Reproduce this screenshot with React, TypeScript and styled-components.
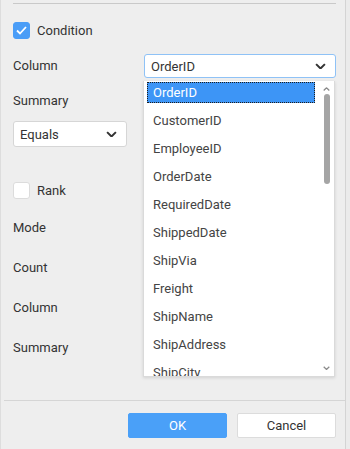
import styled, { createGlobalStyle } from 'styled-components';

const Global = createGlobalStyle`
  html, body {
    margin: 0;
    padding: 0;
    background: #eeeeee;
  }
  body {
    font-family: Roboto, "Liberation Sans", sans-serif;
    font-size: 13px;
    color: #333333;
  }
`;

const Frame = styled.div`
  display: flex;
  width: 350px;
  height: 449px;
  overflow: hidden;
`;

const Panel = styled.div`
  position: relative;
  flex: 1;
  display: flex;
  flex-direction: column;
  border-left: 1px solid #dddddd;
`;

const Edge = styled.div`
  width: 4px;
  border-left: 1px solid #d4d4d4;
  background: #ebebeb;
`;

const TopRule = styled.div`
  height: 1px;
  margin: 3px 9px 0 12px;
  background: #c9c9c9;
`;

const Form = styled.div`
  display: flex;
  flex-direction: column;
  padding: 0 9px 0 12px;
`;

const Row = styled.div<{ $top: number; $h: number }>`
  display: flex;
  align-items: center;
  height: ${(p) => p.$h}px;
  margin-top: ${(p) => p.$top}px;
`;

const Label = styled.span`
  flex: 1;
  line-height: 16px;
`;

const Check = styled.span<{ $on?: boolean }>`
  display: inline-flex;
  align-items: center;
  justify-content: center;
  box-sizing: border-box;
  width: 17px;
  height: 17px;
  margin-right: 7px;
  border-radius: 3px;
  background: ${(p) => (p.$on ? '#4a9df7' : '#ffffff')};
  border: 1px solid ${(p) => (p.$on ? '#4a9df7' : '#dcdcdc')};
`;

const CheckText = styled.span`
  line-height: 16px;
`;

const Select = styled.div<{ $w: number; $focus?: boolean }>`
  display: flex;
  align-items: center;
  justify-content: space-between;
  box-sizing: border-box;
  width: ${(p) => p.$w}px;
  height: 100%;
  padding: 0 9px 0 6px;
  background: #ffffff;
  border: 1px solid ${(p) => (p.$focus ? '#8fc2f6' : '#d6d6d6')};
  border-radius: 3px;
  color: #333333;
`;

const Popup = styled.div`
  position: absolute;
  left: 142px;
  top: 81px;
  box-sizing: border-box;
  width: 192px;
  height: 296px;
  padding: 1px 0 0 3px;
  background: #ffffff;
  border: 1px solid #dadada;
  border-top: none;
  box-shadow: 0 1px 3px rgba(0, 0, 0, 0.12);
  overflow: hidden;
`;

const Item = styled.div<{ $sel?: boolean }>`
  box-sizing: border-box;
  width: 168px;
  height: 21px;
  margin-bottom: 7px;
  padding-left: 5px;
  display: flex;
  align-items: center;
  color: ${(p) => (p.$sel ? '#ffffff' : '#444444')};
  background: ${(p) => (p.$sel ? '#3d95f6' : 'transparent')};
  border: 1px dotted ${(p) => (p.$sel ? '#1d1d1d' : 'transparent')};
`;

const Track = styled.div`
  position: absolute;
  top: 0;
  right: 0;
  width: 15px;
  height: 100%;
  display: flex;
  flex-direction: column;
  align-items: center;
`;

const Arrow = styled.div<{ $up?: boolean }>`
  display: flex;
  margin-top: ${(p) => (p.$up ? '6px' : 'auto')};
  margin-bottom: ${(p) => (p.$up ? '0' : '6px')};
  transform: ${(p) => (p.$up ? 'rotate(180deg)' : 'none')};
`;

const Thumb = styled.div`
  width: 6px;
  height: 90px;
  margin-top: 3px;
  border-radius: 3px;
  background: #a5a5a5;
`;

const Footer = styled.div`
  box-sizing: border-box;
  margin: auto 0 0 3px;
  height: 49px;
  border-top: 1px solid #d5d5d5;
  display: flex;
  justify-content: flex-end;
  align-items: flex-start;
  gap: 10px;
  padding: 12px 9px 0 0;
`;

const Button = styled.button<{ $primary?: boolean }>`
  width: 99px;
  height: 25px;
  border-radius: 2px;
  font-family: Roboto, "Liberation Sans", sans-serif;
  font-size: 13px;
  border: 1px solid ${(p) => (p.$primary ? '#4aa0f8' : '#dcdcdc')};
  background: ${(p) => (p.$primary ? '#4aa0f8' : '#ffffff')};
  color: ${(p) => (p.$primary ? '#ffffff' : '#333333')};
`;

const Chevron = ({ size = 11, color = '#333' }: { size?: number; color?: string }) => (
  <svg width={size} height={size * 0.6} viewBox="0 0 10 6">
    <polyline points="1,1 5,5 9,1" fill="none" stroke={color} strokeWidth="1.8" />
  </svg>
);

const Tick = () => (
  <svg width="11" height="9" viewBox="0 0 11 9">
    <polyline points="1,4.5 4,7.5 10,1" fill="none" stroke="#fff" strokeWidth="1.8" />
  </svg>
);

const columns = [
  'OrderID',
  'CustomerID',
  'EmployeeID',
  'OrderDate',
  'RequiredDate',
  'ShippedDate',
  'ShipVia',
  'Freight',
  'ShipName',
  'ShipAddress',
  'ShipCity',
];

export default function App() {
  return (
    <Frame>
      <Global />
      <Panel>
        <TopRule />
        <Form>
          <Row $top={18} $h={17}>
            <Check $on>
              <Tick />
            </Check>
            <CheckText>Condition</CheckText>
          </Row>
          <Row $top={15} $h={24}>
            <Label>Column</Label>
            <Select $w={192} $focus>
              OrderID
              <Chevron />
            </Select>
          </Row>
          <Row $top={15} $h={16}>
            <Label>Summary</Label>
          </Row>
          <Row $top={12} $h={26}>
            <Select $w={114}>
              Equals
              <Chevron />
            </Select>
          </Row>
          <Row $top={35} $h={17}>
            <Check />
            <CheckText>Rank</CheckText>
          </Row>
          <Row $top={21} $h={16}>
            <Label>Mode</Label>
          </Row>
          <Row $top={24} $h={16}>
            <Label>Count</Label>
          </Row>
          <Row $top={24} $h={16}>
            <Label>Column</Label>
          </Row>
          <Row $top={24} $h={16}>
            <Label>Summary</Label>
          </Row>
        </Form>
        <Footer>
          <Button $primary>OK</Button>
          <Button>Cancel</Button>
        </Footer>
        <Popup>
          {columns.map((c, i) => (
            <Item key={c} $sel={i === 0}>
              {c}
            </Item>
          ))}
          <Track>
            <Arrow $up>
              <Chevron size={7} color="#8a8a8a" />
            </Arrow>
            <Thumb />
            <Arrow>
              <Chevron size={7} color="#8a8a8a" />
            </Arrow>
          </Track>
        </Popup>
      </Panel>
      <Edge />
    </Frame>
  );
}
